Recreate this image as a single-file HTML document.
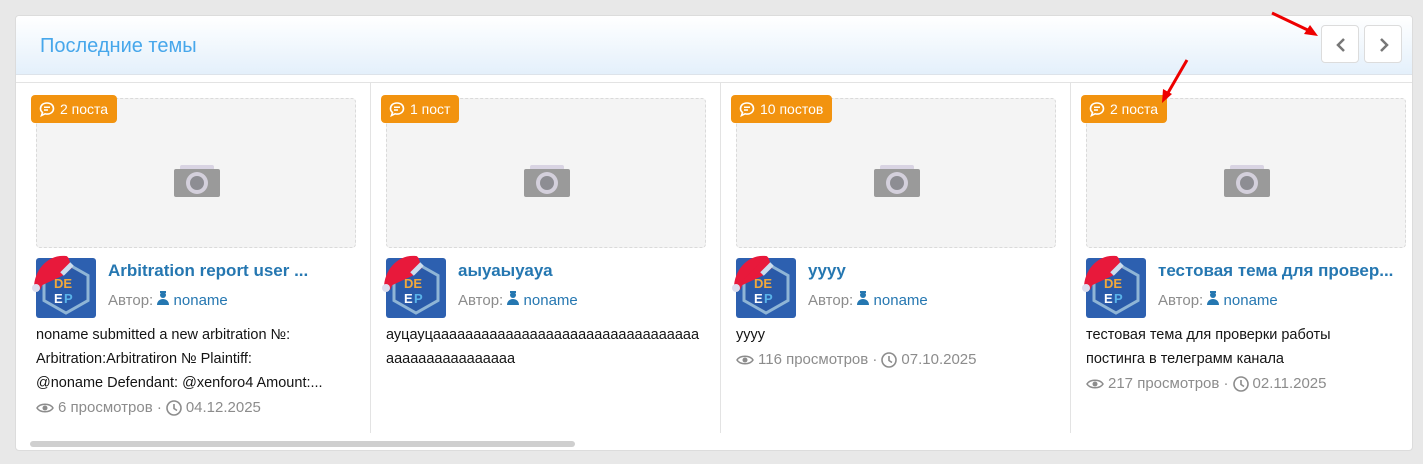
<!DOCTYPE html>
<html><head><meta charset="utf-8"><style>
*{box-sizing:border-box;margin:0;padding:0}
body{width:1423px;height:464px;background:#e8e8e8;font-family:"Liberation Sans",sans-serif;position:relative;overflow:hidden}
.panel{position:absolute;left:15px;top:15px;width:1398px;height:436px;background:#fff;border:1px solid #dcdcdc;border-radius:4px;overflow:hidden}
.hdr{height:59px;background:linear-gradient(#fff,#e4f0fb);border-bottom:1px solid #dde3ea;position:relative}
.hdr h2{position:absolute;left:24px;top:19px;font-size:20px;font-weight:normal;color:#47a7eb}
.nav{position:absolute;top:9px;width:38px;height:38px;border:1px solid #dcdcdc;border-radius:4px;background:#fff}
.line2{position:absolute;left:0;right:0;top:66px;border-top:1px solid #e3e3e3}
.sep{position:absolute;top:67px;height:350px;border-left:1px solid #e3e3e3}
.card{position:absolute;top:67px;width:350px;height:350px}
.img{position:absolute;left:20px;top:15px;width:320px;height:150px;background:#f4f4f4;border:1px dashed #dadada;border-radius:4px}
.cam{position:absolute;left:137px;top:66px}
.badge{position:absolute;left:15px;top:12px;height:28px;padding:0 9px 0 8px;background:#f2930f;color:#fff;border-radius:4px;font-size:14px;line-height:28px;display:flex;align-items:center;gap:4px}
.av{position:absolute;left:10px;top:165px}
.t{position:absolute;left:92px;top:178px;font-size:17px;font-weight:bold;color:#2577b1;white-space:nowrap;width:245px;overflow:hidden;text-overflow:ellipsis}
.au{position:absolute;left:92px;top:208px;font-size:15px;color:#8c8c8c}
.au b{color:#2577b1;font-weight:normal}
.d{position:absolute;left:20px;top:240px;width:318px;font-size:14.5px;line-height:24px;color:#141414;word-break:break-all}
.m{position:absolute;left:20px;font-size:15px;color:#8c8c8c;display:flex;align-items:center;gap:4px}
.sb{position:absolute;left:14px;top:425px;width:545px;height:6px;background:#cfcfcf;border-radius:3px}
</style></head><body>
<svg width="0" height="0" style="position:absolute">
<defs>
<g id="cam"><rect x="6" y="0" width="34" height="6" rx="2" fill="#d9d4e3"/><rect x="0" y="4" width="46" height="28" rx="2" fill="#9a9a9a"/><circle cx="23" cy="18" r="11" fill="#d4d0dc"/><circle cx="23" cy="18" r="7" fill="#8d8d93"/></g>
<g id="bub"><path d="M8 2C4 2 1.5 4.5 1.5 7.5c0 1.6.8 3 2 4l-1 3 3.5-1.7c.6.2 1.3.3 2 .3 4 0 6.5-2.5 6.5-5.6S12 2 8 2z" fill="none" stroke="#fff" stroke-width="1.6"/><path d="M5 6.3h6M5 9h4" stroke="#fff" stroke-width="1.5"/></g>
<g id="av"><rect x="10" y="10" width="60" height="60" rx="3" fill="#2d60b0"/><path d="M40 15l22 12.5v25L40 65 18 52.5v-25z" fill="#2a5aa8" stroke="#8fb5d6" stroke-width="3"/><text x="28" y="40" font-size="13" font-weight="bold" fill="#f2a93b" font-family="Liberation Sans">DE</text><text x="28" y="55" font-size="13" font-weight="bold" fill="#fff" font-family="Liberation Sans">E</text><text x="38" y="55" font-size="13" font-weight="bold" fill="#5ab4ea" font-family="Liberation Sans">P</text><path d="M8 40C8 22 22 6 40 8c2 0 4 4 4 8l-4 4C30 20 20 28 14 42z" fill="#e8193b"/><path d="M10 40L40 8 46 20 36 28z" fill="#e8193b"/><circle cx="10" cy="40" r="4" fill="#dde"/><path d="M36 26l10-10" stroke="#cde" stroke-width="5"/></g>
<g id="eye"><path d="M1 8c3-5 13-5 16 0-3 5-13 5-16 0z" fill="none" stroke="#8c8c8c" stroke-width="1.5"/><circle cx="9" cy="8" r="2.5" fill="#8c8c8c"/></g>
<g id="clk"><circle cx="8" cy="8" r="7" fill="none" stroke="#8c8c8c" stroke-width="1.6"/><path d="M8 4v4.5l3 2" fill="none" stroke="#8c8c8c" stroke-width="1.6"/></g>
<g id="usr"><circle cx="6" cy="4" r="3" fill="#2577b1"/><path d="M0 14c0-4 3-6 6-6s6 2 6 6z" fill="#2577b1"/><rect x="3" y="0" width="6" height="2" fill="#2577b1"/></g>
</defs></svg>
<div class="panel">
<div class="hdr"><h2>Последние темы</h2>
<div class="nav" style="left:1305px"><svg width="38" height="38"><path d="M22 13l-6 6 6 6" stroke="#777" stroke-width="2.5" fill="none"/></svg></div>
<div class="nav" style="left:1348px"><svg width="38" height="38"><path d="M16 13l6 6-6 6" stroke="#777" stroke-width="2.5" fill="none"/></svg></div>
</div>
<div class="line2"></div>
<div class="sep" style="left:354px"></div><div class="sep" style="left:704px"></div><div class="sep" style="left:1054px"></div>

<div class="card" style="left:0">
<div class="img"><svg class="cam" width="46" height="32"><use href="#cam"/></svg></div>
<div class="badge"><svg width="17" height="16"><use href="#bub"/></svg>2 поста</div>
<svg class="av" width="80" height="80"><use href="#av"/></svg>
<div class="t">Arbitration report user ...</div>
<div class="au">Автор: <b><svg width="12" height="14"><use href="#usr"/></svg> noname</b></div>
<div class="d" style="white-space:nowrap">noname submitted a new arbitration №:<br>Arbitration:Arbitratiron № Plaintiff:<br>@noname Defendant: @xenforo4 Amount:...</div>
<div class="m" style="top:316px"><svg width="18" height="16"><use href="#eye"/></svg>6 просмотров · <svg width="16" height="16"><use href="#clk"/></svg>04.12.2025</div>
</div>

<div class="card" style="left:350px">
<div class="img"><svg class="cam" width="46" height="32"><use href="#cam"/></svg></div>
<div class="badge"><svg width="17" height="16"><use href="#bub"/></svg>1 пост</div>
<svg class="av" width="80" height="80"><use href="#av"/></svg>
<div class="t">аыуаыуауа</div>
<div class="au">Автор: <b><svg width="12" height="14"><use href="#usr"/></svg> noname</b></div>
<div class="d">ауцауцааааааааааааааааааааааааааааааааааааааааааааааааа</div>
</div>

<div class="card" style="left:700px">
<div class="img"><svg class="cam" width="46" height="32"><use href="#cam"/></svg></div>
<div class="badge"><svg width="17" height="16"><use href="#bub"/></svg>10 постов</div>
<svg class="av" width="80" height="80"><use href="#av"/></svg>
<div class="t">уууу</div>
<div class="au">Автор: <b><svg width="12" height="14"><use href="#usr"/></svg> noname</b></div>
<div class="d">уууу</div>
<div class="m" style="top:268px"><svg width="18" height="16"><use href="#eye"/></svg>116 просмотров · <svg width="16" height="16"><use href="#clk"/></svg>07.10.2025</div>
</div>

<div class="card" style="left:1050px">
<div class="img"><svg class="cam" width="46" height="32"><use href="#cam"/></svg></div>
<div class="badge"><svg width="17" height="16"><use href="#bub"/></svg>2 поста</div>
<svg class="av" width="80" height="80"><use href="#av"/></svg>
<div class="t">тестовая тема для провер...</div>
<div class="au">Автор: <b><svg width="12" height="14"><use href="#usr"/></svg> noname</b></div>
<div class="d" style="word-break:normal;width:300px">тестовая тема для проверки работы постинга в телеграмм канала</div>
<div class="m" style="top:292px"><svg width="18" height="16"><use href="#eye"/></svg>217 просмотров · <svg width="16" height="16"><use href="#clk"/></svg>02.11.2025</div>
</div>

<div class="sb"></div>
</div>
<svg style="position:absolute;left:0;top:0" width="1423" height="464"><path d="M1272 13L1314 33" stroke="#e00" stroke-width="3"/><path d="M1318 36l-14-2 6-9z" fill="#e00"/><path d="M1187 60L1165 98" stroke="#e00" stroke-width="3"/><path d="M1162 103l1-14 9 5z" fill="#e00"/></svg>
</body></html>
